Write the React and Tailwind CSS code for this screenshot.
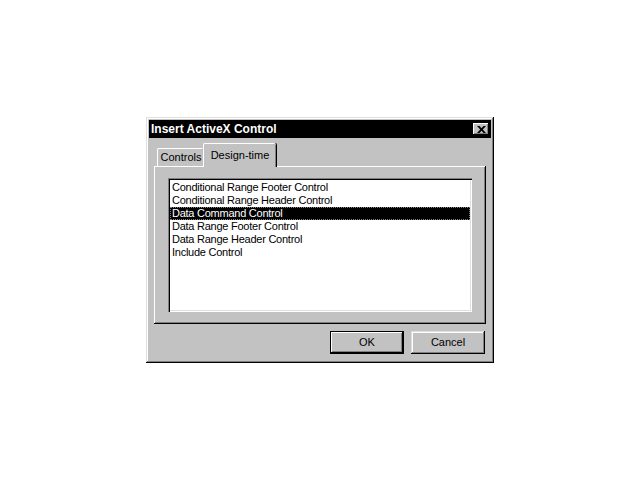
const items = [
  'Conditional Range Footer Control',
  'Conditional Range Header Control',
  'Data Command Control',
  'Data Range Footer Control',
  'Data Range Header Control',
  'Include Control',
]

const raised =
  'shadow-[inset_-1px_-1px_#000,inset_1px_1px_#dfdfdf,inset_-2px_-2px_#808080,inset_2px_2px_#fff]'

const App = () => {
  return (
    <main
      className="h-[480px] w-[640px] bg-white pl-[146px] pt-[117px] text-black"
      style={{ fontFamily: '"Liberation Sans", Arial, sans-serif' }}
    >
      <div className={`flex h-[246px] w-[348px] flex-col bg-[#c2c2c2] p-[3px] ${raised}`}>
        <div className="flex h-[18px] items-center justify-between bg-black pl-[2px] pr-[2px]">
          <span className="text-[12px] font-bold leading-none text-white">Insert ActiveX Control</span>
          <button className="flex h-[12px] w-[16px] items-center justify-center bg-[#c2c2c2] shadow-[inset_-1px_-1px_#000,inset_1px_1px_#fff,inset_-2px_-2px_#808080]">
            <svg width="9" height="7" viewBox="0 0 9 7">
              <path d="M0 0h2.5L4.5 2.2 6.5 0H9L5.8 3.5 9 7H6.5L4.5 4.8 2.5 7H0l3.2-3.5z" fill="#000" />
            </svg>
          </button>
        </div>

        <div className="ml-[8px] mt-[5px] flex items-end">
          <div className="flex h-[18px] w-[47px] items-center justify-center rounded-t-[2px] border-l border-t border-white text-[11px] leading-none shadow-[inset_-1px_0_#808080,1px_0_#000]">
            Controls
          </div>
          <div className="relative z-10 -mb-[1px] -ml-[1px] flex h-[24px] w-[73px] items-start justify-center rounded-t-[2px] border-l border-t border-white bg-[#c2c2c2] pt-[6px] text-[11px] leading-none shadow-[inset_-1px_0_#808080,1px_0_#000]">
            Design-time
          </div>
        </div>

        <div className="ml-[5px] h-[158px] w-[332px] bg-[#c2c2c2] pl-[14px] pt-[12px] shadow-[inset_-1px_-1px_#000,inset_1px_1px_#fff,inset_-2px_-2px_#808080]">
          <div className="h-[134px] w-[304px] bg-white p-[2px] shadow-[inset_1px_1px_#808080,inset_2px_2px_#000,inset_-1px_-1px_#fff,inset_-2px_-2px_#dfdfdf]">
            <ul className="pt-[1px] text-[11px] leading-[13px] tracking-[-0.25px]">
              {items.map((item) => (
                <li
                  key={item}
                  className={
                    item === 'Data Command Control'
                      ? 'bg-black pl-[2px] text-white outline-1 -outline-offset-1 outline-dotted outline-[#808080]'
                      : 'pl-[2px]'
                  }
                >
                  {item}
                </li>
              ))}
            </ul>
          </div>
        </div>

        <div className="mr-[6px] mt-[7px] flex justify-end gap-[7px]">
          <button className="flex h-[23px] w-[74px] items-center justify-center border border-black bg-[#c2c2c2] text-[11px] shadow-[inset_-1px_-1px_#000,inset_1px_1px_#fff,inset_-2px_-2px_#808080]">
            OK
          </button>
          <button className={`flex h-[23px] w-[74px] items-center justify-center bg-[#c2c2c2] text-[11px] ${raised}`}>
            Cancel
          </button>
        </div>
      </div>
    </main>
  )
}

export default App
